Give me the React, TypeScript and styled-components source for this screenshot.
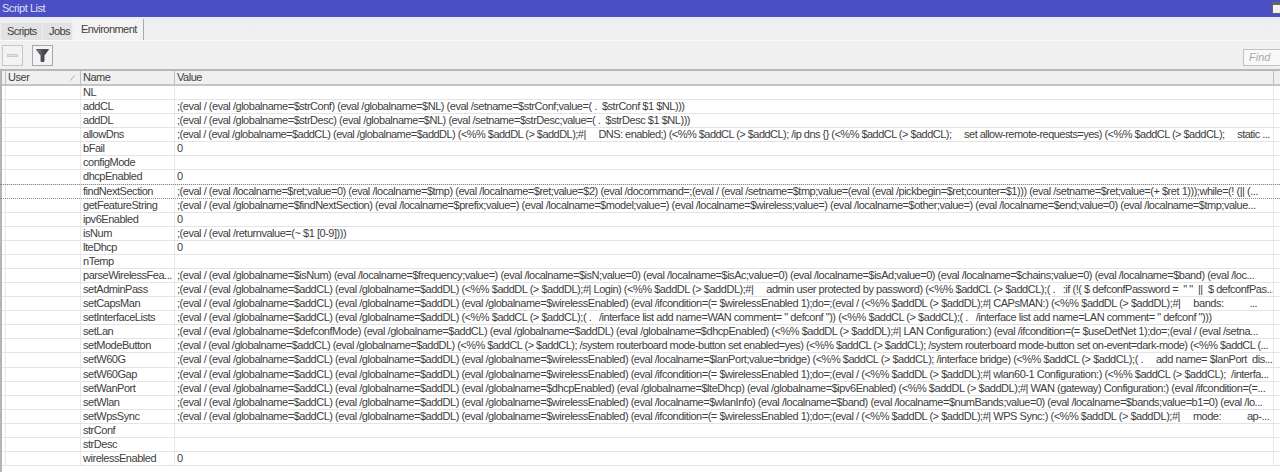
import React from "react";
import styled, { createGlobalStyle } from "styled-components";

const Global = createGlobalStyle`
  html, body { margin: 0; padding: 0; background: #f0f0f0; }
  body { font-family: "Liberation Sans", Arial, sans-serif; }
`;

const Window = styled.div`
  width: 1280px;
  height: 472px;
  overflow: hidden;
  display: flex;
  flex-direction: column;
  background: #f0f0f0;
  font-family: "Liberation Sans", Arial, sans-serif;
  color: #404040;
  font-size: 11px;
  letter-spacing: -0.47px;
`;
const TitleBar = styled.div`
  height: 17px;
  flex: none;
  background: #4a4fc4;
  color: #dfe0f5;
  line-height: 17px;
  padding-left: 2px;
  display: flex;
  justify-content: space-between;
`;
const WinButton = styled.div`
  width: 8px;
  height: 12px;
  margin-top: 2px;
  background: #f2f2f2;
  border: 1px solid #666;
  border-top-width: 3px;
  border-right: none;
  box-sizing: border-box;
`;
const TabStrip = styled.div`
  height: 24px;
  flex: none;
  display: flex;
  align-items: flex-end;
  padding-left: 1px;
  background: linear-gradient(#e9e9f6 0, #efeff2 4px, #f0f0f0 100%);
  border-bottom: 1px solid #f9f9f9;
  box-sizing: border-box;
`;
const Tab = styled.div<{ $width: number; $active?: boolean }>`
  width: ${(p) => p.$width}px;
  box-sizing: border-box;
  height: ${(p) => (p.$active ? 21 : 17)}px;
  line-height: ${(p) => (p.$active ? 20 : 17)}px;
  padding-left: ${(p) => (p.$active ? 8 : 6)}px;
  margin-right: ${(p) => (p.$active ? 0 : 1)}px;
  background: ${(p) => (p.$active ? "#f3f3f3" : "#e2e2e2")};
  border-right: ${(p) => (p.$active ? "1px solid #aaa" : "none")};
  letter-spacing: -0.55px;
`;
const Toolbar = styled.div`
  height: 28px;
  flex: none;
  display: flex;
  align-items: center;
  gap: 9px;
  padding-left: 2px;
  background: #f0f0f0;
`;
const ToolButton = styled.div<{ $disabled?: boolean }>`
  width: 21px;
  height: 21px;
  box-sizing: border-box;
  border: 1px solid ${(p) => (p.$disabled ? "#c8c8c8" : "#a8a8a8")};
  background: #f3f3f3;
  display: flex;
  align-items: center;
  justify-content: center;
`;
const Dash = styled.div`
  width: 11px;
  height: 3px;
  background: #e2e2dc;
  border: 1px solid #cacac6;
  box-sizing: border-box;
`;
const FindBox = styled.div`
  margin-left: auto;
  margin-top: 5px;
  width: 37px;
  height: 17px;
  box-sizing: border-box;
  border: 1px solid #c2c2c2;
  border-right: none;
  background: #f8f8f8;
  color: #a8a8a8;
  font-style: italic;
  line-height: 15px;
  padding-left: 5px;
  letter-spacing: 0;
`;
const Table = styled.div`
  flex: 1;
  display: flex;
  flex-direction: column;
  background: #fff;
  border-left: 2px solid #b4b4b4;
`;
const Columns = `
  display: grid;
  grid-template-columns: 3px 75px 94px 1099px 1fr;
`;
const Header = styled.div`
  ${Columns}
  flex: none;
  background: #f0f0f0;
  border-top: 2px solid #b8b8b8;
  border-bottom: 2px solid #c4c4c4;
  box-sizing: border-box;
  height: 17px;
`;
const HeadCell = styled.div`
  border-left: 1px solid #c0c0c0;
  line-height: 13px;
  padding-left: 2px;
  position: relative;
  white-space: nowrap;
`;
const SortMark = styled.svg`
  position: absolute;
  right: 5px;
  top: 4px;
`;
const Row = styled.div<{ $focus?: boolean }>`
  ${Columns}
  flex: none;
  box-sizing: border-box;
  border-bottom: 1px ${(p) => (p.$focus ? "dotted #8a8a8a" : "solid #e4e4e4")};
  border-top: ${(p) => (p.$focus ? "1px dotted #8a8a8a" : "none")};
  margin-top: ${(p) => (p.$focus ? "-1px" : "0")};
  height: ${(p) => (p.$focus ? "15.08px" : "14.08px")};
  margin-left: ${(p) => (p.$focus ? "-2px" : "0")};
  padding-left: ${(p) => (p.$focus ? "2px" : "0")};
`;
const Cell = styled.div<{ $spacing?: number }>`
  border-left: 1px solid #e8e8e8;
  line-height: 13px;
  padding-left: 2px;
  white-space: pre;
  overflow: hidden;
  letter-spacing: ${(p) => p.$spacing ?? -0.47}px;
`;

const rows: [string, string, number?][] = [
  ["NL", ""],
  ["addCL", ";(eval / (eval /globalname=$strConf) (eval /globalname=$NL) (eval /setname=$strConf;value=( .  $strConf $1 $NL)))"],
  ["addDL", ";(eval / (eval /globalname=$strDesc) (eval /globalname=$NL) (eval /setname=$strDesc;value=( .  $strDesc $1 $NL)))"],
  ["allowDns", ";(eval / (eval /globalname=$addCL) (eval /globalname=$addDL) (<%% $addDL (> $addDL);#|     DNS: enabled;) (<%% $addCL (> $addCL); /ip dns {} (<%% $addCL (> $addCL);     set allow-remote-requests=yes) (<%% $addCL (> $addCL);     static ...", -0.53],
  ["bFail", "0"],
  ["configMode", ""],
  ["dhcpEnabled", "0"],
  ["findNextSection", ";(eval / (eval /localname=$ret;value=0) (eval /localname=$tmp) (eval /localname=$ret;value=$2) (eval /docommand=;(eval / (eval /setname=$tmp;value=(eval (eval /pickbegin=$ret;counter=$1))) (eval /setname=$ret;value=(+ $ret 1)));while=(! (|| (..."],
  ["getFeatureString", ";(eval / (eval /globalname=$findNextSection) (eval /localname=$prefix;value=) (eval /localname=$model;value=) (eval /localname=$wireless;value=) (eval /localname=$other;value=) (eval /localname=$end;value=0) (eval /localname=$tmp;value..."],
  ["ipv6Enabled", "0"],
  ["isNum", ";(eval / (eval /returnvalue=(~ $1 [0-9])))"],
  ["lteDhcp", "0"],
  ["nTemp", ""],
  ["parseWirelessFea...", ";(eval / (eval /globalname=$isNum) (eval /localname=$frequency;value=) (eval /localname=$isN;value=0) (eval /localname=$isAc;value=0) (eval /localname=$isAd;value=0) (eval /localname=$chains;value=0) (eval /localname=$band) (eval /loc..."],
  ["setAdminPass", ";(eval / (eval /globalname=$addCL) (eval /globalname=$addDL) (<%% $addDL (> $addDL);#| Login) (<%% $addDL (> $addDL);#|     admin user protected by password) (<%% $addCL (> $addCL);( .   :if (!( $ defconfPassword =  \" \"  ||  $ defconfPas..."],
  ["setCapsMan", ";(eval / (eval /globalname=$addCL) (eval /globalname=$addDL) (eval /globalname=$wirelessEnabled) (eval /ifcondition=(= $wirelessEnabled 1);do=;(eval / (<%% $addDL (> $addDL);#| CAPsMAN:) (<%% $addDL (> $addDL);#|     bands:          ..."],
  ["setInterfaceLists", ";(eval / (eval /globalname=$addCL) (eval /globalname=$addDL) (<%% $addCL (> $addCL);( .   /interface list add name=WAN comment= \" defconf \")) (<%% $addCL (> $addCL);( .   /interface list add name=LAN comment= \" defconf \")))"],
  ["setLan", ";(eval / (eval /globalname=$defconfMode) (eval /globalname=$addCL) (eval /globalname=$addDL) (eval /globalname=$dhcpEnabled) (<%% $addDL (> $addDL);#| LAN Configuration:) (eval /ifcondition=(= $useDetNet 1);do=;(eval / (eval /setna..."],
  ["setModeButton", ";(eval / (eval /globalname=$addCL) (eval /globalname=$addDL) (<%% $addCL (> $addCL); /system routerboard mode-button set enabled=yes) (<%% $addCL (> $addCL); /system routerboard mode-button set on-event=dark-mode) (<%% $addCL (...", -0.54],
  ["setW60G", ";(eval / (eval /globalname=$addCL) (eval /globalname=$addDL) (eval /globalname=$wirelessEnabled) (eval /localname=$lanPort;value=bridge) (<%% $addCL (> $addCL); /interface bridge) (<%% $addCL (> $addCL);( .     add name= $lanPort  dis..."],
  ["setW60Gap", ";(eval / (eval /globalname=$addCL) (eval /globalname=$addDL) (eval /globalname=$wirelessEnabled) (eval /ifcondition=(= $wirelessEnabled 1);do=;(eval / (<%% $addDL (> $addDL);#| wlan60-1 Configuration:) (<%% $addCL (> $addCL);  /interfa..."],
  ["setWanPort", ";(eval / (eval /globalname=$addCL) (eval /globalname=$addDL) (eval /globalname=$dhcpEnabled) (eval /globalname=$lteDhcp) (eval /globalname=$ipv6Enabled) (<%% $addDL (> $addDL);#| WAN (gateway) Configuration:) (eval /ifcondition=(=..."],
  ["setWlan", ";(eval / (eval /globalname=$addCL) (eval /globalname=$addDL) (eval /globalname=$wirelessEnabled) (eval /localname=$wlanInfo) (eval /localname=$band) (eval /localname=$numBands;value=0) (eval /localname=$bands;value=b1=0) (eval /lo..."],
  ["setWpsSync", ";(eval / (eval /globalname=$addCL) (eval /globalname=$addDL) (eval /globalname=$wirelessEnabled) (eval /ifcondition=(= $wirelessEnabled 1);do=;(eval / (<%% $addDL (> $addDL);#| WPS Sync:) (<%% $addDL (> $addDL);#|     mode:          ap-..."],
  ["strConf", ""],
  ["strDesc", ""],
  ["wirelessEnabled", "0"],
];

export default function App() {
  return (
    <Window>
      <Global />
      <TitleBar>
        <span>Script List</span>
        <WinButton />
      </TitleBar>
      <TabStrip>
        <Tab $width={41}>Scripts</Tab>
        <Tab $width={29}>Jobs</Tab>
        <Tab $width={71} $active>Environment</Tab>
      </TabStrip>
      <Toolbar>
        <ToolButton $disabled>
          <Dash />
        </ToolButton>
        <ToolButton>
          <svg width="15" height="15" viewBox="0 0 15 15">
            <defs>
              <linearGradient id="funnel" x1="0" y1="0" x2="1" y2="0">
                <stop offset="0" stopColor="#8b9096" />
                <stop offset="0.5" stopColor="#4c5157" />
                <stop offset="1" stopColor="#2f3336" />
              </linearGradient>
            </defs>
            <path d="M1.5 1.5h12L9 7.5v6H6v-6z" fill="url(#funnel)" stroke="#3a3e42" strokeWidth="0.8" />
          </svg>
        </ToolButton>
        <FindBox>Find</FindBox>
      </Toolbar>
      <Table>
        <Header>
          <div />
          <HeadCell>
            User
            <SortMark width="5" height="6" viewBox="0 0 5 6">
              <path d="M0.5 5.5 4.5 0.5" stroke="#b0b0b0" fill="none" />
            </SortMark>
          </HeadCell>
          <HeadCell>Name</HeadCell>
          <HeadCell>Value</HeadCell>
          <HeadCell />
        </Header>
        {rows.map(([name, value, spacing]) => (
          <Row key={name} $focus={name === "findNextSection"}>
            <div />
            <Cell />
            <Cell>{name}</Cell>
            <Cell $spacing={spacing}>{value}</Cell>
            <Cell />
          </Row>
        ))}
      </Table>
    </Window>
  );
}
